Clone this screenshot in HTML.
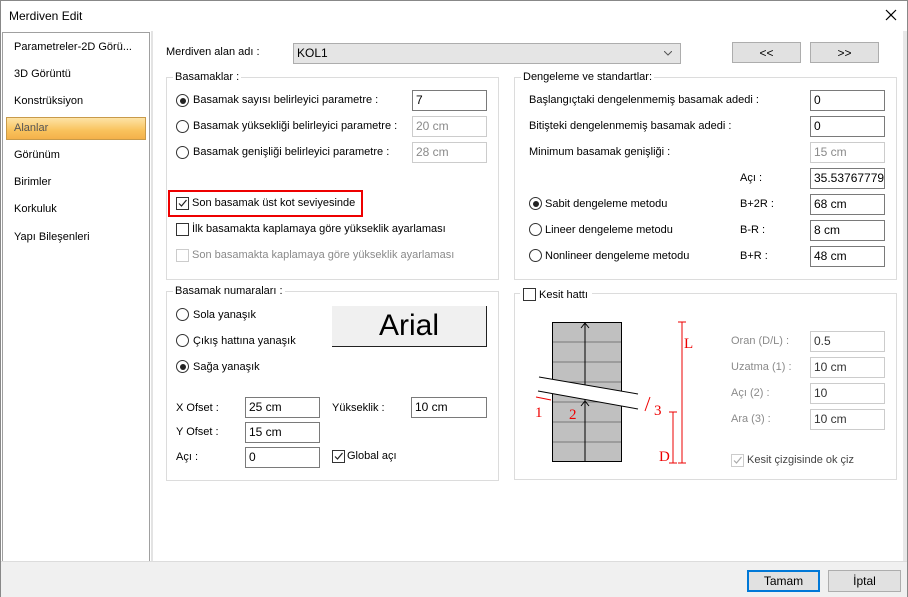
<!DOCTYPE html>
<html><head><meta charset="utf-8"><style>
*{box-sizing:border-box;margin:0;padding:0}
body{width:908px;height:597px;position:relative;overflow:hidden;background:#fff;font-family:"Liberation Sans",sans-serif;font-size:11px;color:#000}
.a{position:absolute;white-space:nowrap}
.inp{position:absolute;height:21px;border:1px solid #7a7a7a;background:#fff;padding:2px 0 0 3px;font-size:12px}
.dis{border-color:#ccc;color:#8a8a8a}
.grp{position:absolute;border:1px solid #dcdcdc}
.lg{position:absolute;background:#fff;padding:0 2px;top:-7px;left:6px;white-space:nowrap}
.rb{position:absolute;width:13px;height:13px;border:1px solid #333;border-radius:50%;background:#fff}
.rb.on::after{content:"";position:absolute;left:2.5px;top:2.5px;width:6px;height:6px;border-radius:50%;background:#222}
.cb{position:absolute;width:13px;height:13px;border:1px solid #333;background:#fff}
.btn{position:absolute;background:#e1e1e1;border:1px solid #adadad;text-align:center;font-size:12px}
.g{color:#8a8a8a}
</style></head><body>
<div class="a" style="left:9px;top:9px;font-size:12px">Merdiven Edit</div>
<svg class="a" style="left:885px;top:9px" width="12" height="12"><path d="M1 1L11 11M11 1L1 11" stroke="#000" stroke-width="1.2"/></svg>
<div style="position:absolute;left:0;top:0;width:908px;height:1px;background:#888"></div>
<div style="position:absolute;left:0;top:0;width:1px;height:597px;background:#888"></div>
<div style="position:absolute;left:907px;top:0;width:1px;height:597px;background:#888"></div>
<div style="position:absolute;left:903px;top:31px;width:4px;height:530px;background:#e8e8e8"></div>
<div style="position:absolute;left:151px;top:31px;width:2px;height:530px;background:#e3e3e3"></div>
<div style="position:absolute;left:1px;top:561px;width:906px;height:36px;background:#f0f0f0;border-top:1px solid #dcdcdc"></div>
<div style="position:absolute;left:2px;top:32px;width:148px;height:529px;border:1px solid #a0a0a0;border-bottom:none;background:#fff"></div>
<div style="position:absolute;left:6px;top:117px;width:140px;height:23px;border:1px solid #c89a4a;background:linear-gradient(#fde3a6,#f9c25c 60%,#f4b14a)"></div>
<div class="a" style="left:14px;top:41px">Parametreler-2D Görü...</div>
<div class="a" style="left:14px;top:68px">3D Görüntü</div>
<div class="a" style="left:14px;top:95px">Konstrüksiyon</div>
<div class="a" style="left:14px;top:122px;color:#555">Alanlar</div>
<div class="a" style="left:14px;top:149px">Görünüm</div>
<div class="a" style="left:14px;top:176px">Birimler</div>
<div class="a" style="left:14px;top:203px">Korkuluk</div>
<div class="a" style="left:14px;top:231px">Yapı Bileşenleri</div>
<div class="a" style="left:166px;top:46px">Merdiven alan adı :</div>
<div style="position:absolute;left:293px;top:43px;width:388px;height:21px;background:#e5e5e5;border:1px solid #adadad;padding:2px 0 0 3px;font-size:12px">KOL1<svg style="position:absolute;right:8px;top:7px" width="8" height="5"><path d="M0 0l4 4 4-4" stroke="#555" fill="none"/></svg></div>
<div class="btn" style="left:732px;top:42px;width:69px;height:21px;padding-top:3px">&lt;&lt;</div>
<div class="btn" style="left:810px;top:42px;width:69px;height:21px;padding-top:3px">&gt;&gt;</div>
<div class="grp" style="left:166px;top:77px;width:333px;height:203px"><span class="lg">Basamaklar :</span></div>
<div class="rb on" style="left:176px;top:94px"></div><div class="a" style="left:193px;top:94px">Basamak sayısı belirleyici parametre :</div>
<div class="inp" style="left:412px;top:90px;width:75px">7</div>
<div class="rb" style="left:176px;top:120px"></div><div class="a" style="left:193px;top:120px">Basamak yüksekliği belirleyici parametre :</div>
<div class="inp dis" style="left:412px;top:116px;width:75px">20 cm</div>
<div class="rb" style="left:176px;top:146px"></div><div class="a" style="left:193px;top:146px">Basamak genişliği belirleyici parametre :</div>
<div class="inp dis" style="left:412px;top:142px;width:75px">28 cm</div>
<div style="position:absolute;left:168px;top:190px;width:195px;height:27px;border:2px solid #e00"></div>
<div class="cb" style="left:176px;top:197px"><svg width="11" height="11" style="position:absolute"><path d="M2 5.5l2.5 2.5 5-6" stroke="#222" fill="none" stroke-width="1.2"/></svg></div>
<div class="a" style="left:192px;top:197px">Son basamak üst kot seviyesinde</div>
<div class="cb" style="left:176px;top:223px"></div><div class="a" style="left:192px;top:223px">İlk basamakta kaplamaya göre yükseklik ayarlaması</div>
<div class="cb" style="left:176px;top:249px;border-color:#ccc"></div><div class="a g" style="left:192px;top:249px">Son basamakta kaplamaya göre yükseklik ayarlaması</div>
<div class="grp" style="left:166px;top:291px;width:333px;height:190px"><span class="lg">Basamak numaraları :</span></div>
<div class="rb" style="left:176px;top:308px"></div><div class="a" style="left:193px;top:309px">Sola yanaşık</div>
<div class="rb" style="left:176px;top:334px"></div><div class="a" style="left:193px;top:335px">Çıkış hattına yanaşık</div>
<div class="rb on" style="left:176px;top:360px"></div><div class="a" style="left:193px;top:361px">Sağa yanaşık</div>
<div style="position:absolute;left:332px;top:306px;width:155px;height:41px;background:#f0f0f0;border-right:1px solid #222;border-bottom:1px solid #222;font-size:30px;text-align:center;line-height:40px">Arial</div>
<div class="a" style="left:176px;top:402px">X Ofset :</div><div class="inp" style="left:245px;top:397px;width:75px">25 cm</div>
<div class="a" style="left:332px;top:402px">Yükseklik :</div><div class="inp" style="left:411px;top:397px;width:76px">10 cm</div>
<div class="a" style="left:176px;top:426px">Y Ofset :</div><div class="inp" style="left:245px;top:422px;width:75px">15 cm</div>
<div class="a" style="left:176px;top:451px">Açı :</div><div class="inp" style="left:245px;top:447px;width:75px">0</div>
<div class="cb" style="left:332px;top:450px"><svg width="11" height="11" style="position:absolute"><path d="M2 5.5l2.5 2.5 5-6" stroke="#222" fill="none" stroke-width="1.2"/></svg></div><div class="a" style="left:347px;top:450px">Global açı</div>
<div class="grp" style="left:514px;top:77px;width:383px;height:203px"><span class="lg">Dengeleme ve standartlar:</span></div>
<div class="a" style="left:529px;top:94px">Başlangıçtaki dengelenmemiş basamak adedi :</div><div class="inp" style="left:810px;top:90px;width:75px">0</div>
<div class="a" style="left:529px;top:120px">Bitişteki dengelenmemiş basamak adedi :</div><div class="inp" style="left:810px;top:116px;width:75px">0</div>
<div class="a" style="left:529px;top:146px">Minimum basamak genişliği :</div><div class="inp dis" style="left:810px;top:142px;width:75px">15 cm</div>
<div class="a" style="left:740px;top:172px">Açı :</div><div class="inp" style="left:810px;top:168px;width:75px;overflow:hidden">35.537677792</div>
<div class="rb on" style="left:529px;top:197px"></div><div class="a" style="left:545px;top:198px">Sabit dengeleme metodu</div><div class="a" style="left:740px;top:198px">B+2R :</div><div class="inp" style="left:810px;top:194px;width:75px">68 cm</div>
<div class="rb" style="left:529px;top:223px"></div><div class="a" style="left:545px;top:224px">Lineer dengeleme metodu</div><div class="a" style="left:740px;top:224px">B-R :</div><div class="inp" style="left:810px;top:220px;width:75px">8 cm</div>
<div class="rb" style="left:529px;top:249px"></div><div class="a" style="left:545px;top:250px">Nonlineer dengeleme metodu</div><div class="a" style="left:740px;top:250px">B+R :</div><div class="inp" style="left:810px;top:246px;width:75px">48 cm</div>
<div class="grp" style="left:514px;top:293px;width:383px;height:187px"></div>
<div style="position:absolute;left:520px;top:286px;width:72px;height:14px;background:#fff"></div>
<div class="cb" style="left:523px;top:288px"></div><div class="a" style="left:539px;top:289px">Kesit hattı</div>
<svg class="a" style="left:0;top:0" width="908" height="597">
<rect x="552.5" y="322.5" width="69" height="139" fill="#c0c0c0" stroke="#000"/>
<g stroke="#777"><line x1="553" y1="342" x2="621" y2="342"/><line x1="553" y1="362" x2="621" y2="362"/><line x1="553" y1="382" x2="621" y2="382"/><line x1="553" y1="402" x2="621" y2="402"/><line x1="553" y1="422" x2="621" y2="422"/><line x1="553" y1="442" x2="621" y2="442"/></g>
<line x1="585" y1="323" x2="585" y2="461" stroke="#000"/>
<polygon points="539,377 638,394 638,409 538,391" fill="#fff"/>
<line x1="539" y1="377" x2="638" y2="394" stroke="#000"/>
<line x1="538" y1="391" x2="638" y2="409" stroke="#000"/>
<path d="M581 328l4-5 4 5M581 406l4-5 4 5" stroke="#000" fill="none"/>
<g stroke="#e00" fill="none"><line x1="682" y1="322" x2="682" y2="463"/><line x1="678" y1="322" x2="686" y2="322"/><line x1="678" y1="463" x2="686" y2="463"/><line x1="673" y1="412" x2="673" y2="463"/><line x1="669" y1="412" x2="677" y2="412"/><line x1="669" y1="463" x2="677" y2="463"/><line x1="536" y1="397" x2="551" y2="400"/><line x1="650" y1="397" x2="645" y2="411"/></g>
<g fill="#e00" font-family="Liberation Serif,serif" font-size="15"><text x="684" y="348">L</text><text x="659" y="461">D</text><text x="535" y="417">1</text><text x="569" y="419">2</text><text x="654" y="415">3</text></g>
</svg>
<div class="a g" style="left:731px;top:335px">Oran (D/L) :</div><div class="inp dis" style="left:810px;top:331px;width:75px;color:#333">0.5</div>
<div class="a g" style="left:731px;top:361px">Uzatma (1) :</div><div class="inp dis" style="left:810px;top:357px;width:75px;color:#333">10 cm</div>
<div class="a g" style="left:731px;top:387px">Açı (2) :</div><div class="inp dis" style="left:810px;top:383px;width:75px;color:#333">10</div>
<div class="a g" style="left:731px;top:413px">Ara (3) :</div><div class="inp dis" style="left:810px;top:409px;width:75px;color:#333">10 cm</div>
<div class="cb" style="left:731px;top:454px;border-color:#ccc"><svg width="11" height="11" style="position:absolute"><path d="M2 5.5l2.5 2.5 5-6" stroke="#aaa" fill="none" stroke-width="1.2"/></svg></div><div class="a" style="left:747px;top:454px;color:#444">Kesit çizgisinde ok çiz</div>
<div class="btn" style="left:747px;top:570px;width:73px;height:22px;border:2px solid #0078d7;padding-top:2px">Tamam</div>
<div class="btn" style="left:828px;top:570px;width:73px;height:22px;padding-top:3px">İptal</div>
</body></html>
